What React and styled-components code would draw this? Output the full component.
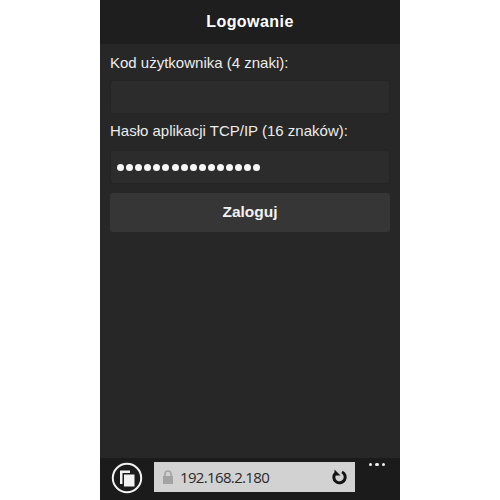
import React from "react";
import styled, { createGlobalStyle } from "styled-components";

const Global = createGlobalStyle`
  html, body { margin: 0; padding: 0; background: #fff; }
  body { font-family: "Liberation Sans", Arial, sans-serif; }
`;

const Phone = styled.div`
  width: 300px;
  height: 500px;
  margin: 0 auto;
  display: flex;
  flex-direction: column;
  background: #272727;
  overflow: hidden;
`;

const Header = styled.header`
  height: 44px;
  flex: none;
  display: flex;
  align-items: center;
  justify-content: center;
  padding-bottom: 1px;
  box-sizing: border-box;
  background: #1e1e1e;
  color: #fff;
  font-size: 16px;
  font-weight: 700;
  letter-spacing: 0.45px;
`;

const Form = styled.main`
  flex: 1;
  display: flex;
  flex-direction: column;
  padding: 10px 10px 0;
`;

const Label = styled.label`
  height: 18px;
  line-height: 18px;
  color: #ececec;
  font-size: 15px;
  margin-bottom: ${(p) => p.$gap}px;
`;

const Field = styled.div`
  height: 34px;
  box-sizing: border-box;
  display: flex;
  align-items: center;
  padding-left: 6px;
  background: #2c2c2c;
  border: 1px solid #242424;
  border-radius: 3px;
  margin-bottom: ${(p) => p.$gap}px;
`;

const Dots = styled.span`
  display: flex;
  gap: 2.1px;
`;

const Dot = styled.i`
  width: 7px;
  height: 7px;
  border-radius: 50%;
  background: #f6f6f6;
`;

const Submit = styled.button`
  height: 39px;
  border: 0;
  border-radius: 3px;
  background: #363636;
  color: #f2f2f2;
  font-family: inherit;
  font-size: 15.5px;
  font-weight: 700;
  padding: 0 0 2px;
`;

const Bar = styled.footer`
  height: 42px;
  flex: none;
  display: flex;
  align-items: flex-start;
  background: #1b1b1b;
  position: relative;
`;

const Tabs = styled.div`
  width: 54px;
  flex: none;
  display: flex;
  justify-content: center;
  padding: 4px 0 0;
  box-sizing: border-box;
`;

const Address = styled.div`
  width: 201px;
  height: 30px;
  margin-top: 4px;
  display: flex;
  align-items: center;
  box-sizing: border-box;
  padding: 0 7px 0 8px;
  background: #d2d2d2;
  color: #2a2a2a;
  font-family: "Open Sans", "Liberation Sans", sans-serif;
  font-size: 15px;
`;

const Url = styled.span`
  flex: 1;
  margin-left: 6px;
  letter-spacing: -0.65px;
`;

const More = styled.div`
  display: flex;
  gap: 3px;
  position: absolute;
  left: 269px;
  top: 5px;
`;

const MoreDot = styled.i`
  width: 3.4px;
  height: 3.4px;
  background: #eee;
  border-radius: 50%;
`;

export default function App() {
  return (
    <>
      <Global />
      <Phone>
        <Header>Logowanie</Header>
        <Form>
          <Label $gap={8}>Kod użytkownika (4 znaki):</Label>
          <Field $gap={8} />
          <Label $gap={10}>Hasło aplikacji TCP/IP (16 znaków):</Label>
          <Field $gap={9}>
            <Dots>
              {Array.from({ length: 16 }, (_, i) => <Dot key={i} />)}
            </Dots>
          </Field>
          <Submit>Zaloguj</Submit>
        </Form>
        <Bar>
          <Tabs>
            <svg width="32" height="32" viewBox="0 0 32 32">
              <circle cx="16" cy="16" r="14.2" fill="none" stroke="#f2f2f2" strokeWidth="2" />
              <path d="M9 8.5h10v2.5h-7.500v11H9z" fill="#f2f2f2" />
              <rect x="13" y="12.500" width="10.500" height="12" fill="#f2f2f2" />
            </svg>
          </Tabs>
          <Address>
            <svg width="12" height="14" viewBox="0 0 12 14">
              <path d="M3 6V4a3 3 0 0 1 6 0v2" fill="none" stroke="#a3a3a3" strokeWidth="1.6" />
              <rect x="1" y="6" width="10" height="8" fill="#a3a3a3" />
            </svg>
            <Url>192.168.2.180</Url>
            <svg width="16" height="16" viewBox="0 0 16 16">
              <path d="M10 3a5.700 5.700 0 1 1-6.600 1.200" fill="none" stroke="#141414" strokeWidth="3" />
              <path d="M2.500 0.500v6h6z" fill="#141414" />
            </svg>
          </Address>
          <More>
            <MoreDot /><MoreDot /><MoreDot />
          </More>
        </Bar>
      </Phone>
    </>
  );
}
